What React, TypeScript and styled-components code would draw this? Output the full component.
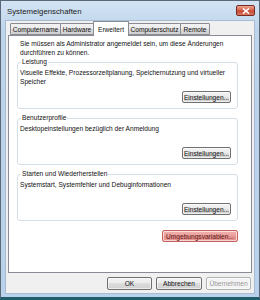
import React from "react";
import styled, { createGlobalStyle } from "styled-components";

const Global = createGlobalStyle`
  html, body { margin: 0; padding: 0; background: #1f5d6b; }
  body { font-family: "Liberation Sans", Arial, sans-serif; }
  * { box-sizing: border-box; }
`;

const Frame = styled.div`
  width: 260px;
  height: 300px;
  display: flex;
  flex-direction: column;
  background: linear-gradient(#d3e3f4, #bdd4eb 30px, #b9d1ea);
  border: 1px solid #5a6878;
  border-bottom: 3px solid #1f5d6b;
  padding: 0 4px 3px 4px;
`;

const TitleBar = styled.div`
  height: 19px;
  display: flex;
  align-items: flex-start;
  justify-content: space-between;
  padding-left: 2px;
`;

const Title = styled.span`
  font-size: 7.8px;
  line-height: 9px;
  color: #1a1a1a;
  margin-top: 6px;
`;

const CloseButton = styled.div`
  width: 19px;
  height: 11px;
  margin-top: 4px;
  border: 1px solid #7a2a24;
  border-radius: 2px;
  background: linear-gradient(#eba592, #d8664f 45%, #c64832 55%, #d97a60);
  display: flex;
  align-items: center;
  justify-content: center;
`;

const Client = styled.div`
  flex: 1;
  background: #f0f0f0;
  border: 1px solid #a7bcd2;
  display: flex;
  flex-direction: column;
  padding: 2px 2px 0 2px;
`;

const TabRow = styled.div`
  display: flex;
  align-items: flex-end;
  height: 12px;
  padding-left: 2px;
  position: relative;
  z-index: 1;
`;

const Tab = styled.div<{ $active?: boolean; $first?: boolean; $w: number }>`
  width: ${(p) => p.$w}px;
  height: ${(p) => (p.$active ? "15px" : "12px")};
  margin-bottom: ${(p) => (p.$active ? "-1px" : "0")};
  margin-left: ${(p) => (p.$first ? "0" : "-1px")};
  display: flex;
  align-items: center;
  justify-content: center;
  padding-top: ${(p) => (p.$active ? "0" : "1px")};
  font-size: 6.6px;
  color: #111;
  white-space: nowrap;
  border: 1px solid #898c95;
  border-bottom: ${(p) => (p.$active ? "none" : "1px solid #898c95")};
  background: ${(p) =>
    p.$active ? "#ffffff" : "linear-gradient(#f2f2f2, #ebebeb 50%, #dddddd 50%, #cfcfcf)"};
  border-radius: 1px 1px 0 0;
  position: relative;
  z-index: ${(p) => (p.$active ? 2 : 1)};
`;

const Panel = styled.div`
  height: 238px;
  background: #ffffff;
  border: 1px solid #898c95;
  padding: 4px 13px 0 8px;
  display: flex;
  flex-direction: column;
`;

const Intro = styled.p`
  margin: 0 0 5px 3px;
  font-size: 6.6px;
  line-height: 8.5px;
  color: #111;
`;

const Group = styled.section<{ $first?: boolean }>`
  position: relative;
  margin-top: ${(p) => (p.$first ? "0" : "9px")};
  height: 47px;
  border: 1px solid #d5dfe5;
  border-radius: 3px;
  padding: 6px 6px 5px 2px;
  display: flex;
  flex-direction: column;
`;

const Legend = styled.span`
  position: absolute;
  top: -5px;
  left: 3px;
  font-size: 6.6px;
  line-height: 8px;
  color: #111;
  padding: 0 1px;
  background: #ffffff;
`;

const GroupText = styled.div`
  font-size: 6.6px;
  line-height: 8.5px;
  color: #111;
  flex: 1;
`;

const Button = styled.button<{ $w: number; $h?: number; $tone?: "normal" | "red" | "disabled" }>`
  width: ${(p) => p.$w}px;
  height: ${(p) => p.$h ?? 12}px;
  padding: 0;
  font-family: "Liberation Sans", Arial, sans-serif;
  font-size: 6.6px;
  color: ${(p) => (p.$tone === "disabled" ? "#9a9a9a" : p.$tone === "red" ? "#5a1a1a" : "#111")};
  border: 1px solid ${(p) => (p.$tone === "disabled" ? "#adb2b5" : p.$tone === "red" ? "#c9625e" : "#707070")};
  border-radius: 2px;
  background: ${(p) =>
    p.$tone === "red"
      ? "linear-gradient(#f1b1ae, #eaa09c 50%, #e48f8b 50%, #e69793)"
      : p.$tone === "disabled"
      ? "#f4f4f4"
      : "linear-gradient(#f2f2f2, #ebebeb 50%, #dddddd 50%, #cfcfcf)"};
  box-shadow: inset 0 0 0 1px rgba(255, 255, 255, 0.6);
`;

const ButtonLine = styled.div`
  display: flex;
  justify-content: flex-end;
`;

const ExtraLine = styled.div`
  display: flex;
  justify-content: flex-end;
  margin-top: 9px;
`;

const Footer = styled.div`
  display: flex;
  justify-content: flex-end;
  padding: 4px 1px 0 0;
`;

const FooterGap = styled.div<{ $w: number }>`
  width: ${(p) => p.$w}px;
`;

const groups = [
  {
    title: "Leistung",
    text: "Visuelle Effekte, Prozessorzeitplanung, Speichernutzung und virtueller Speicher",
  },
  { title: "Benutzerprofile", text: "Desktopeinstellungen bezüglich der Anmeldung" },
  {
    title: "Starten und Wiederherstellen",
    text: "Systemstart, Systemfehler und Debuginformationen",
  },
];

const tabs = [
  { label: "Computername", w: 51 },
  { label: "Hardware", w: 34 },
  { label: "Erweitert", w: 36, active: true },
  { label: "Computerschutz", w: 53 },
  { label: "Remote", w: 30 },
];

export default function App() {
  return (
    <>
      <Global />
      <Frame>
        <TitleBar>
          <Title>Systemeigenschaften</Title>
          <CloseButton>
            <svg width="8" height="6" viewBox="0 0 8 6">
              <path d="M1 0.5 L7 5.5 M7 0.5 L1 5.5" stroke="#ffffff" strokeWidth="1.6" />
            </svg>
          </CloseButton>
        </TitleBar>
        <Client>
          <TabRow>
            {tabs.map((t, i) => (
              <Tab key={t.label} $w={t.w} $active={t.active} $first={i === 0}>
                {t.label}
              </Tab>
            ))}
          </TabRow>
          <Panel>
            <Intro>
              Sie müssen als Administrator angemeldet sein, um diese Änderungen durchführen zu können.
            </Intro>
            {groups.map((g, i) => (
              <Group key={g.title} $first={i === 0}>
                <Legend>{g.title}</Legend>
                <GroupText>{g.text}</GroupText>
                <ButtonLine>
                  <Button $w={49}>Einstellungen...</Button>
                </ButtonLine>
              </Group>
            ))}
            <ExtraLine>
              <Button $w={76} $tone="red">
                Umgebungsvariablen...
              </Button>
            </ExtraLine>
          </Panel>
          <Footer>
            <Button $w={45} $h={13}>OK</Button>
            <FooterGap $w={4} />
            <Button $w={46} $h={13}>Abbrechen</Button>
            <FooterGap $w={4} />
            <Button $w={45} $h={13} $tone="disabled">
              Übernehmen
            </Button>
          </Footer>
        </Client>
      </Frame>
    </>
  );
}
